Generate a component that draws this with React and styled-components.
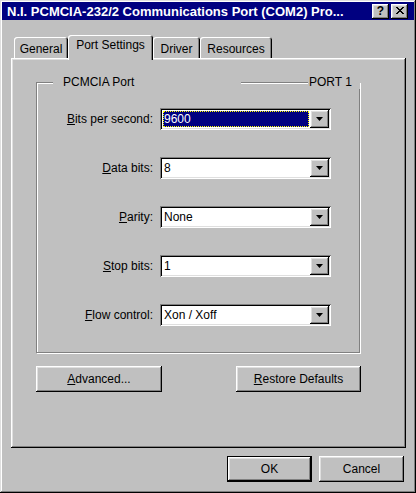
import React from 'react';
import styled, { createGlobalStyle } from 'styled-components';

const GlobalStyle = createGlobalStyle`
  html, body {
    margin: 0;
    padding: 0;
    background: #c0c0c0;
  }
  body {
    font-family: "Liberation Sans", Arial, sans-serif;
    font-size: 12px;
    color: #000;
  }
`;

const raised = `
  box-shadow: inset -1px -1px #000, inset 1px 1px #fff,
    inset -2px -2px #808080, inset 2px 2px #dfdfdf;
`;

const sunken = `
  box-shadow: inset 1px 1px #808080, inset -1px -1px #fff,
    inset 2px 2px #000, inset -2px -2px #dfdfdf;
`;

const Window = styled.div`
  width: 416px;
  height: 493px;
  box-sizing: border-box;
  padding: 2px;
  background: #c0c0c0;
  box-shadow: inset -1px -1px #000, inset 1px 1px #dfdfdf,
    inset -2px -2px #808080, inset 2px 2px #fff;
  display: flex;
  flex-direction: column;
`;

const TitleBar = styled.div`
  height: 18px;
  background: #000080;
  display: flex;
  align-items: center;
  padding: 0 6px 0 5px;
`;

const TitleText = styled.div`
  flex: 1;
  color: #fff;
  font-weight: bold;
  font-size: 13px;
  white-space: nowrap;
  overflow: hidden;
`;

const TitleButtons = styled.div`
  display: flex;
  gap: 2px;
`;

const TitleButton = styled.div`
  width: 17px;
  height: 15px;
  box-sizing: border-box;
  background: #c0c0c0;
  ${raised}
  display: flex;
  align-items: center;
  justify-content: center;
  font-weight: bold;
  font-size: 12px;
  line-height: 1;
  padding-bottom: 1px;
`;

const Body = styled.div`
  flex: 1;
  padding: 13px 8px 0 9px;
  display: flex;
  flex-direction: column;
`;

const TabStrip = styled.div`
  height: 25px;
  display: flex;
  align-items: flex-end;
  padding-left: 3px;
  position: relative;
  z-index: 1;
`;

const Tab = styled.div`
  width: ${({ w }) => w}px;
  height: ${({ active }) => (active ? 25 : 21)}px;
  margin-bottom: ${({ active }) => (active ? -2 : 0)}px;
  box-sizing: border-box;
  background: #c0c0c0;
  border-radius: 3px 3px 0 0;
  box-shadow: inset 1px 1px #fff, inset -1px 0 #000, inset -2px 0 #808080;
  display: flex;
  align-items: center;
  justify-content: center;
  padding-top: ${({ active }) => (active ? 0 : 2)}px;
  padding-bottom: ${({ active }) => (active ? 6 : 0)}px;
  white-space: nowrap;
`;

const Panel = styled.div`
  width: 395px;
  height: 390px;
  box-sizing: border-box;
  padding: 24px 0 0 25px;
  ${raised}
`;

const GroupBox = styled.div`
  position: relative;
  width: 324px;
  height: 271px;
  box-sizing: border-box;
  border: 1px solid #808080;
  box-shadow: 1px 1px 0 #fff, inset 1px 1px 0 #fff;
`;

const Legend = styled.div`
  position: absolute;
  top: -8px;
  left: ${({ left }) => left}px;
  width: ${({ w }) => w}px;
  padding-left: ${({ pad }) => pad}px;
  box-sizing: border-box;
  background: #c0c0c0;
  line-height: 14px;
  white-space: nowrap;
`;

const Fields = styled.div`
  display: grid;
  grid-template-columns: 116px 171px;
  column-gap: 7px;
  row-gap: 27px;
  padding-top: 25px;
  align-items: center;
`;

const Label = styled.label`
  text-align: right;
  white-space: nowrap;
`;

const Combo = styled.div`
  height: 22px;
  box-sizing: border-box;
  padding: 2px;
  background: #fff;
  ${sunken}
  display: flex;
`;

const Field = styled.div`
  flex: 1;
  padding: 1px;
  display: flex;
`;

const Value = styled.div`
  flex: 1;
  display: flex;
  align-items: center;
  padding-left: 1px;
  background: ${({ selected }) => (selected ? '#000080' : 'transparent')};
  color: ${({ selected }) => (selected ? '#fff' : '#000')};
  outline: ${({ selected }) => (selected ? '1px dotted #ffff00' : 'none')};
  outline-offset: -1px;
`;

const DropButton = styled.div`
  width: 19px;
  background: #c0c0c0;
  ${raised}
  display: flex;
  align-items: center;
  justify-content: center;
`;

const ButtonRow = styled.div`
  width: 325px;
  margin-top: 13px;
  display: flex;
  justify-content: space-between;
`;

const Button = styled.div`
  width: ${({ w }) => w}px;
  height: 26px;
  box-sizing: border-box;
  background: #c0c0c0;
  border: ${({ isDefault }) => (isDefault ? '1px solid #000' : 'none')};
  ${raised}
  display: flex;
  align-items: center;
  justify-content: center;
  white-space: nowrap;
`;

const Footer = styled.div`
  margin-top: 8px;
  padding-right: 2px;
  width: 395px;
  box-sizing: border-box;
  display: flex;
  justify-content: flex-end;
  gap: 7px;
`;

const Arrow = () => (
  <svg width="7" height="4" viewBox="0 0 7 4">
    <path d="M0 0h7L3.5 4z" fill="#000" />
  </svg>
);

const CloseGlyph = () => (
  <svg width="8" height="7" viewBox="0 0 8 7" shapeRendering="crispEdges">
    <path
      d="M0 0h2v1h1v1h2V1h1V0h2v1H7v1H6v1H5v1h1v1h1v1h1v1H6V6H5V5H3v1H2v1H0V6h1V5h1V4h1V3H2V2H1V1H0z"
      fill="#000"
    />
  </svg>
);

const fields = [
  { key: 'B', rest: 'its per second:', value: '9600', selected: true },
  { key: 'D', rest: 'ata bits:', value: '8' },
  { key: 'P', rest: 'arity:', value: 'None' },
  { key: 'S', rest: 'top bits:', value: '1' },
  { key: 'F', rest: 'low control:', value: 'Xon / Xoff' },
];

const tabs = [
  { name: 'General', w: 54 },
  { name: 'Port Settings', w: 85, active: true },
  { name: 'Driver', w: 47 },
  { name: 'Resources', w: 72 },
];

export default function App() {
  return (
    <>
      <GlobalStyle />
      <Window>
        <TitleBar>
          <TitleText>N.I. PCMCIA-232/2 Communications Port (COM2) Pro...</TitleText>
          <TitleButtons>
            <TitleButton>?</TitleButton>
            <TitleButton>
              <CloseGlyph />
            </TitleButton>
          </TitleButtons>
        </TitleBar>
        <Body>
          <TabStrip>
            {tabs.map((t) => (
              <Tab key={t.name} w={t.w} active={t.active}>
                {t.name}
              </Tab>
            ))}
          </TabStrip>
          <Panel>
            <GroupBox>
              <Legend left={16} w={188} pad={10}>PCMCIA Port</Legend>
              <Legend left={271} w={52} pad={1}>PORT 1</Legend>
              <Fields>
                {fields.map((f) => (
                  <React.Fragment key={f.key}>
                    <Label>
                      <u>{f.key}</u>
                      {f.rest}
                    </Label>
                    <Combo>
                      <Field>
                        <Value selected={f.selected}>{f.value}</Value>
                      </Field>
                      <DropButton>
                        <Arrow />
                      </DropButton>
                    </Combo>
                  </React.Fragment>
                ))}
              </Fields>
            </GroupBox>
            <ButtonRow>
              <Button w={126}>
                <u>A</u>dvanced...
              </Button>
              <Button w={125}>
                <u>R</u>estore Defaults
              </Button>
            </ButtonRow>
          </Panel>
          <Footer>
            <Button w={85} isDefault>
              OK
            </Button>
            <Button w={85}>Cancel</Button>
          </Footer>
        </Body>
      </Window>
    </>
  );
}
